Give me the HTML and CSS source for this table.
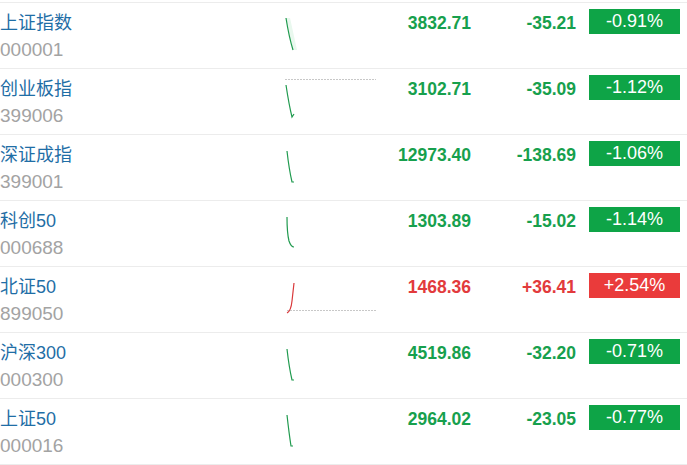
FILE: index.html
```html
<!DOCTYPE html>
<html lang="zh">
<head>
<meta charset="utf-8">
<link rel="stylesheet" href="styles.css">
</head>
<body>
<div class="list">
  <div class="row">
    <div class="name"><div class="title">上证指数</div><div class="code">000001</div></div>
    <div class="chart"><svg width="92" height="65" viewBox="0 0 92 65"><path class="glow-g" d="M1 15 Q4 32 8 47 L12 47 L5 15 Z"/><path class="line-g" d="M1 15 Q4 34 8 47"/></svg></div>
    <div class="price down">3832.71</div>
    <div class="chg down">-35.21</div>
    <div class="pct"><span class="badge bg-down">-0.91%</span></div>
  </div>
  <div class="row">
    <div class="name"><div class="title">创业板指</div><div class="code">399006</div></div>
    <div class="chart"><svg width="92" height="65" viewBox="0 0 92 65"><line class="dash" x1="0" y1="10.5" x2="91" y2="10.5"/><path class="line-g" d="M1 16 Q4 36 7 48 L9 45"/></svg></div>
    <div class="price down">3102.71</div>
    <div class="chg down">-35.09</div>
    <div class="pct"><span class="badge bg-down">-1.12%</span></div>
  </div>
  <div class="row">
    <div class="name"><div class="title">深证成指</div><div class="code">399001</div></div>
    <div class="chart"><svg width="92" height="65" viewBox="0 0 92 65"><path class="line-g" d="M2 16 Q4 34 7 47 L9 47"/></svg></div>
    <div class="price down">12973.40</div>
    <div class="chg down">-138.69</div>
    <div class="pct"><span class="badge bg-down">-1.06%</span></div>
  </div>
  <div class="row">
    <div class="name"><div class="title">科创50</div><div class="code">000688</div></div>
    <div class="chart"><svg width="92" height="65" viewBox="0 0 92 65"><path class="line-g" d="M2 16 Q2 32 4 40 Q6 46 9 46"/></svg></div>
    <div class="price down">1303.89</div>
    <div class="chg down">-15.02</div>
    <div class="pct"><span class="badge bg-down">-1.14%</span></div>
  </div>
  <div class="row">
    <div class="name"><div class="title">北证50</div><div class="code">899050</div></div>
    <div class="chart"><svg width="92" height="65" viewBox="0 0 92 65"><line class="dash" x1="2" y1="43.5" x2="91" y2="43.5"/><path class="line-r" d="M2 46 Q6 44 7 34 L9 16"/></svg></div>
    <div class="price up">1468.36</div>
    <div class="chg up">+36.41</div>
    <div class="pct"><span class="badge bg-up">+2.54%</span></div>
  </div>
  <div class="row">
    <div class="name"><div class="title">沪深300</div><div class="code">000300</div></div>
    <div class="chart"><svg width="92" height="65" viewBox="0 0 92 65"><path class="line-g" d="M2 16 Q4 34 7 47 L9 47"/></svg></div>
    <div class="price down">4519.86</div>
    <div class="chg down">-32.20</div>
    <div class="pct"><span class="badge bg-down">-0.71%</span></div>
  </div>
  <div class="row">
    <div class="name"><div class="title">上证50</div><div class="code">000016</div></div>
    <div class="chart"><svg width="92" height="65" viewBox="0 0 92 65"><path class="line-g" d="M2 16 Q4 34 6 47 L8 47"/></svg></div>
    <div class="price down">2964.02</div>
    <div class="chg down">-23.05</div>
    <div class="pct"><span class="badge bg-down">-0.77%</span></div>
  </div>
</div>
</body>
</html>
```
FILE: styles.css
```css
html, body {
  margin: 0;
  padding: 0;
  background: #fff;
}
body {
  font-family: "Liberation Sans", "Noto Sans CJK SC", Arial, sans-serif;
}
.list {
  padding-top: 2px;
  width: 687px;
}
.row {
  display: grid;
  grid-template-columns: 285px 92px 94px 105px 104px 7px;
  height: 65px;
  border-top: 1px solid #ececec;
}
.row:last-child {
  border-bottom: 1px solid #ececec;
}
.name {
  padding-top: 8px;
  font-size: 18px;
  line-height: 24px;
}
.title {
  color: #1f6ea6;
}
.code {
  margin-top: 3px;
  font-size: 19px;
  color: #a3a3a3;
}
.chart svg {
  display: block;
}
.dash {
  stroke: #c8c8c8;
  stroke-width: 1;
  stroke-dasharray: 2 1;
}
.line-g {
  fill: none;
  stroke: #1f9a4e;
  stroke-width: 1.2;
}
.glow-g {
  fill: #e9f8ee;
  stroke: none;
}
.line-r {
  fill: none;
  stroke: #d9383a;
  stroke-width: 1.2;
}
.price, .chg {
  text-align: right;
  font-weight: bold;
  font-size: 17.5px;
  line-height: 20px;
  padding-top: 10px;
}
.down { color: #17a04d; }
.up { color: #e23a3c; }
.pct {
  grid-column: 5;
  padding-top: 6px;
  padding-left: 13px;
}
.badge {
  display: block;
  width: 91px;
  height: 25px;
  line-height: 25px;
  text-align: center;
  color: #fff;
  font-size: 18px;
}
.bg-down { background: #0ea447; }
.bg-up { background: #ea3b3b; }
```
